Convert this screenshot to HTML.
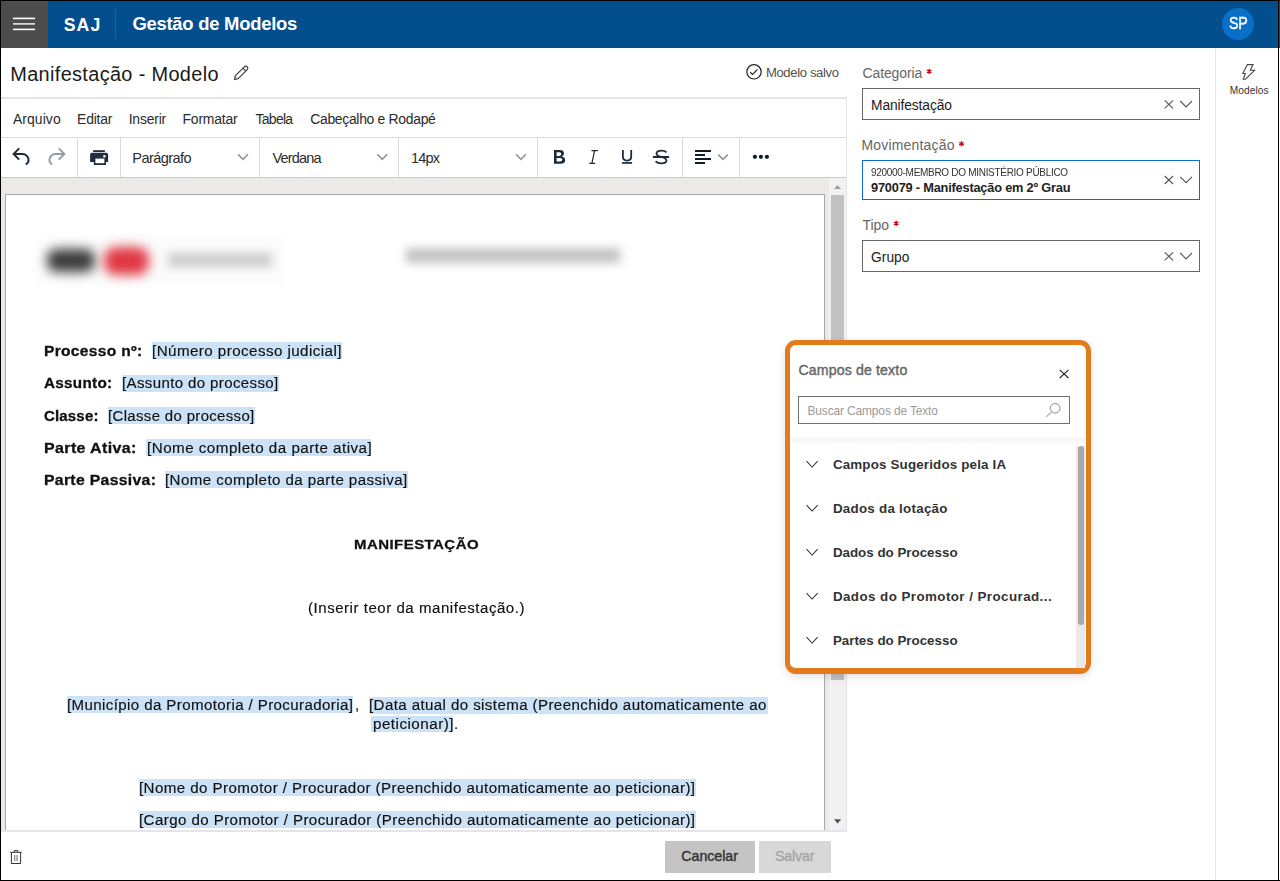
<!DOCTYPE html>
<html><head><meta charset="utf-8">
<style>
html,body{margin:0;padding:0;}
body{width:1280px;height:881px;overflow:hidden;position:relative;background:#fff;font-family:"Liberation Sans",sans-serif;}
.a{position:absolute;}
.t{position:absolute;white-space:pre;line-height:1;font-family:"Liberation Sans",sans-serif;}
</style></head><body>
<!-- header -->
<div class="a" style="left:0;top:0;width:1280px;height:48px;background:#034e8c"></div>
<div class="a" style="left:1px;top:1px;width:47px;height:47px;background:#4c4c4c"></div>
<div class="a" style="left:115px;top:9px;width:1px;height:30px;background:#1a64a6"></div>
<div class="a" style="left:1222px;top:8px;width:32px;height:32px;border-radius:50%;background:#0a6fc9"></div>

<!-- editor title row separator -->
<div class="a" style="left:1px;top:97px;width:846px;height:2px;background:#e4e4ea"></div>
<div class="a" style="left:846px;top:97px;width:1px;height:735px;background:#e4e4ea"></div>
<div class="a" style="left:1px;top:137px;width:845px;height:1px;background:#dcdcdc"></div>
<div class="a" style="left:1px;top:177px;width:845px;height:1px;background:#cacaca"></div>
<!-- toolbar separators -->
<div class="a" style="left:77px;top:138px;width:1px;height:39px;background:#dadada"></div>
<div class="a" style="left:120px;top:138px;width:1px;height:39px;background:#dadada"></div>
<div class="a" style="left:259px;top:138px;width:1px;height:39px;background:#dadada"></div>
<div class="a" style="left:398px;top:138px;width:1px;height:39px;background:#dadada"></div>
<div class="a" style="left:537px;top:138px;width:1px;height:39px;background:#dadada"></div>
<div class="a" style="left:682px;top:138px;width:1px;height:39px;background:#dadada"></div>
<div class="a" style="left:739px;top:138px;width:1px;height:39px;background:#dadada"></div>

<!-- editor content area -->
<div class="a" style="left:1px;top:178px;width:845px;height:652px;background:#ebeae8;overflow:hidden">
  <div class="a" style="left:4px;top:16px;width:818px;height:700px;background:#fff;border:1px solid #a8a8a8;border-bottom:none"></div>
</div>
<div class="a" style="left:1px;top:830px;width:846px;height:2px;background:#e4e4ea"></div>
<!-- scrollbar -->
<div class="a" style="left:829px;top:178px;width:17px;height:652px;background:#f1f1f1"></div>
<div class="a" style="left:831px;top:195px;width:13px;height:485px;background:#c1c1c1"></div>

<!-- blurred logo -->
<div class="a" style="left:38px;top:238px;width:246px;height:46px;background:#fbfbfb;filter:blur(5px)"></div>
<div class="a" style="left:47px;top:249px;width:48px;height:23px;background:#3c3c3c;border-radius:9px;filter:blur(6px)"></div>
<div class="a" style="left:104px;top:247px;width:45px;height:28px;background:#e03843;border-radius:12px;filter:blur(6px)"></div>
<div class="a" style="left:168px;top:253px;width:104px;height:14px;background:#cdcdcd;filter:blur(5px)"></div>
<div class="a" style="left:406px;top:248px;width:214px;height:15px;background:#c2c2c2;filter:blur(5px)"></div>

<!-- highlights -->
<div class="a" style="left:152px;top:342px;width:190px;height:17px;background:#cce2f6"></div>
<div class="a" style="left:122px;top:375px;width:157px;height:17px;background:#cce2f6"></div>
<div class="a" style="left:108px;top:407px;width:147px;height:17px;background:#cce2f6"></div>
<div class="a" style="left:146px;top:439px;width:225px;height:17px;background:#cce2f6"></div>
<div class="a" style="left:165px;top:471px;width:243px;height:17px;background:#cce2f6"></div>
<div class="a" style="left:67px;top:696px;width:286px;height:17px;background:#cce2f6"></div>
<div class="a" style="left:369px;top:697px;width:399px;height:17px;background:#cce2f6"></div>
<div class="a" style="left:371px;top:716px;width:82px;height:16px;background:#cce2f6"></div>
<div class="a" style="left:139px;top:779px;width:557px;height:17px;background:#cce2f6"></div>
<div class="a" style="left:139px;top:811px;width:557px;height:17px;background:#cce2f6"></div>

<!-- right panel -->
<div class="a" style="left:1215px;top:48px;width:1px;height:832px;background:#e6e6e6"></div>
<div class="a" style="left:862px;top:88px;width:336px;height:30px;border:1px solid #666"></div>
<div class="a" style="left:862px;top:160px;width:336px;height:38px;border:1px solid #0a6ccf"></div>
<div class="a" style="left:862px;top:240px;width:336px;height:30px;border:1px solid #666"></div>

<!-- footer buttons -->
<div class="a" style="left:665px;top:841px;width:90px;height:32px;background:#c4c4c4"></div>
<div class="a" style="left:759px;top:841px;width:72px;height:32px;background:#d8d8d8"></div>

<!-- popup -->
<div class="a" style="left:785px;top:340px;width:296px;height:323px;border:5px solid #e37b1c;border-bottom-width:6px;border-radius:11px;background:#fff;box-shadow:0 3px 8px rgba(0,0,0,0.12)">
</div>
<div class="a" style="left:798px;top:396px;width:270px;height:26px;border:1px solid #707070"></div>
<div class="a" style="left:790px;top:438px;width:295px;height:8px;background:linear-gradient(#f4f4f4,#fff)"></div>
<div class="a" style="left:1076px;top:446px;width:9px;height:222px;background:#e9e9e9"></div>
<div class="a" style="left:1078px;top:446px;width:6px;height:179px;background:#a8a8a8;border-radius:3px"></div>

<!-- black frame -->
<div class="a" style="left:0;top:0;width:1280px;height:1px;background:#000"></div>
<div class="a" style="left:0;top:0;width:1px;height:881px;background:#000"></div>
<div class="a" style="left:0;top:880px;width:1280px;height:1px;background:#000"></div>
<div class="a" style="left:1278px;top:0;width:1px;height:881px;background:#000"></div>

<svg class="a" style="left:0;top:0" width="1280" height="881" viewBox="0 0 1280 881">
<!-- hamburger -->
<rect x="13" y="17.6" width="22" height="1.6" fill="#fff"/>
<rect x="13" y="23.1" width="22" height="1.6" fill="#e8e8e8"/>
<rect x="13" y="28.6" width="22" height="1.6" fill="#fff"/>
<!-- pencil -->
<g transform="translate(241.2,72.8) rotate(-45)">
<path d="M-6.5,-2 L6.5,-2 A2,2 0 0 1 6.5,2 L-6.5,2 L-9.5,0 Z" fill="none" stroke="#333" stroke-width="1.1"/>
<line x1="4.5" y1="-2" x2="4.5" y2="2" stroke="#333" stroke-width="1"/>
<path d="M-6.5,-2 L-9.5,0 L-6.5,2 Z" fill="#888"/>
</g>
<!-- check circle -->
<circle cx="754" cy="71.8" r="7.2" fill="none" stroke="#222" stroke-width="1.2"/>
<path d="M750.3,72.3 L752.5,74.4 L757.5,69.3" fill="none" stroke="#222" stroke-width="1.2"/>
<!-- undo -->
<path d="M19.2,148.4 L13.6,154 L19.2,159.6" fill="none" stroke="#1f2d3d" stroke-width="2"/>
<path d="M13.6,154 L22,154 A6.5,5.8 0 0 1 25.8,164.5" fill="none" stroke="#1f2d3d" stroke-width="2"/>
<!-- redo -->
<path d="M58.8,148.4 L64.4,154 L58.8,159.6" fill="none" stroke="#959ca3" stroke-width="2"/>
<path d="M64.4,154 L56,154 A6.5,5.8 0 0 0 52.2,164.5" fill="none" stroke="#959ca3" stroke-width="2"/>
<!-- printer -->
<rect x="93.1" y="150.2" width="11.8" height="1.8" fill="#1f2d3d"/>
<path d="M92,152.7 L106.2,152.7 Q108.1,152.7 108.1,154.6 L108.1,161.9 L106,161.9 L106,165 L93.8,165 L93.8,161.9 L90.1,161.9 L90.1,154.6 Q90.1,152.7 92,152.7 Z" fill="#1f2d3d"/>
<rect x="95.4" y="158.6" width="9" height="4.6" fill="#fff"/>
<circle cx="104.4" cy="156.3" r="1.2" fill="#fff"/>
<!-- toolbar chevrons -->
<path d="M238,154.3 L243,159.3 L248,154.3" fill="none" stroke="#8d949b" stroke-width="1.6"/>
<path d="M377.3,154.3 L382.3,159.3 L387.3,154.3" fill="none" stroke="#8d949b" stroke-width="1.6"/>
<path d="M516,154.3 L521,159.3 L526,154.3" fill="none" stroke="#8d949b" stroke-width="1.6"/>
<path d="M718.2,154.6 L723,159.4 L727.8,154.6" fill="none" stroke="#8d949b" stroke-width="1.6"/>
<!-- B I U S -->
<path d="M554,150.1 L559.6,150.1 Q564,150.1 564,153.5 Q564,155.8 561.6,156.6 Q565.2,157.4 565.2,160.2 Q565.2,163.8 560.4,163.8 L554,163.8 Z M556.6,152.3 L556.6,155.9 L559.4,155.9 Q561.3,155.9 561.3,154.1 Q561.3,152.3 559.4,152.3 Z M556.6,158 L556.6,161.6 L560,161.6 Q562.4,161.6 562.4,159.8 Q562.4,158 560,158 Z" fill="#1d2a3a" fill-rule="evenodd"/>
<path d="M591.5,150.6 L597.8,150.6 M589.2,163.4 L595.2,163.4 M594.6,150.6 L591.9,163.4" fill="none" stroke="#1d2a3a" stroke-width="1.2"/>
<path d="M622.9,150.1 L622.9,156.6 Q622.9,160.6 627.1,160.6 Q631.2,160.6 631.2,156.6 L631.2,150.1" fill="none" stroke="#1d2a3a" stroke-width="1.8"/>
<rect x="622" y="162.1" width="10.1" height="1.7" fill="#1d2a3a"/>
<path d="M666.5,152.3 Q665,150.7 661.5,150.7 Q656.5,150.7 656.5,153.8 Q656.5,155.8 661,156.8 Q666.5,158 666.5,160.6 Q666.5,163.3 661.5,163.3 Q657.5,163.3 655.5,161.3" fill="none" stroke="#1d2a3a" stroke-width="1.8"/>
<rect x="652.9" y="156" width="16.2" height="2" fill="#1d2a3a"/>
<!-- align -->
<rect x="695" y="150" width="16" height="2" fill="#111d2c"/>
<rect x="695" y="154" width="10" height="2" fill="#111d2c"/>
<rect x="695" y="158" width="16" height="2" fill="#111d2c"/>
<rect x="695" y="162" width="10" height="2" fill="#111d2c"/>
<!-- dots -->
<circle cx="754.9" cy="156.8" r="2.1" fill="#111d2c"/>
<circle cx="760.9" cy="156.8" r="2.1" fill="#111d2c"/>
<circle cx="766.9" cy="156.8" r="2.1" fill="#111d2c"/>
<!-- editor scroll arrows -->
<path d="M834,189 L837.5,185 L841,189 Z" fill="#a3a3a3"/>
<path d="M834,819.3 L837.6,823.5 L841.2,819.3 Z" fill="#505050"/>
<!-- input X and chevrons -->
<g fill="none" stroke="#555" stroke-width="1.1">
<path d="M1164.7,100.3 L1173.1,108.3 M1173.1,100.3 L1164.7,108.3"/>
<path d="M1180.2,101 L1186.1,106.9 L1192,101"/>
<path d="M1164.7,176 L1173.1,184 M1173.1,176 L1164.7,184"/>
<path d="M1180.2,176.8 L1186.1,182.7 L1192,176.8"/>
<path d="M1164.7,252.3 L1173.1,260.3 M1173.1,252.3 L1164.7,260.3"/>
<path d="M1180.2,253 L1186.1,258.9 L1192,253"/>
</g>
<!-- lightning -->
<path d="M1247.4,64.6 L1253,64.6 L1250.3,70.3 L1254.6,70.3 L1245.5,79.2 L1243.3,79.2 L1245.3,73.5 L1242.8,73.5 Z" fill="none" stroke="#444" stroke-width="1.1" stroke-linejoin="miter"/>
<!-- popup close -->
<path d="M1059.7,369.8 L1068.5,378 M1068.5,369.8 L1059.7,378" fill="none" stroke="#222" stroke-width="1.05"/>
<!-- search icon -->
<circle cx="1055.2" cy="408.3" r="4.8" fill="none" stroke="#8a8a8a" stroke-width="1"/>
<path d="M1051.8,411.8 L1046.3,416.8" fill="none" stroke="#8a8a8a" stroke-width="1"/>
<!-- list chevrons -->
<g fill="none" stroke="#333" stroke-width="1.05">
<path d="M806.5,461.2 L812.1,467 L817.7,461.2"/>
<path d="M806.5,505.2 L812.1,511 L817.7,505.2"/>
<path d="M806.5,549.2 L812.1,555 L817.7,549.2"/>
<path d="M806.5,593.2 L812.1,599 L817.7,593.2"/>
<path d="M806.5,637.2 L812.1,643 L817.7,637.2"/>
</g>
<!-- trash -->
<g fill="none" stroke="#333" stroke-width="1">
<path d="M10.2,852.3 L21.7,852.3"/>
<path d="M14.2,852.3 L14.2,850.6 L17.8,850.6 L17.8,852.3"/>
<path d="M11.4,852.3 L11.4,863.5 L20.6,863.5 L20.6,852.3"/>
</g>
<rect x="14.3" y="855" width="0.9" height="6" fill="#555"/>
<rect x="16.6" y="855" width="0.9" height="6" fill="#555"/>
<!-- asterisks -->
<path d="M929.20,68.80 L929.20,74.00 M926.95,70.10 L931.45,72.70 M931.45,70.10 L926.95,72.70" stroke="#d0021b" stroke-width="1.3" fill="none"/>
<path d="M961.50,141.20 L961.50,146.40 M959.25,142.50 L963.75,145.10 M963.75,142.50 L959.25,145.10" stroke="#d0021b" stroke-width="1.3" fill="none"/>
<path d="M896.20,220.80 L896.20,226.00 M893.95,222.10 L898.45,224.70 M898.45,222.10 L893.95,224.70" stroke="#d0021b" stroke-width="1.3" fill="none"/>
</svg>

<div class="t" style="left:63.80px;top:16.50px;font-size:17.73px;font-weight:700;color:#fff;letter-spacing:0.993px">SAJ</div>
<div class="t" style="left:132.40px;top:14.80px;font-size:18.46px;font-weight:700;color:#fff;letter-spacing:-0.262px">Gestão de Modelos</div>
<div class="t" style="left:1229.00px;top:15.90px;font-size:15.70px;font-weight:400;color:#fff;letter-spacing:-0.375px;-webkit-text-stroke:0.4px #fff;transform:scaleX(0.9060);transform-origin:0 0">SP</div>
<div class="t" style="left:10.25px;top:64.80px;font-size:19.91px;font-weight:400;color:#1a1a1a;letter-spacing:0.345px">Manifestação - Modelo</div>
<div class="t" style="left:765.90px;top:66.00px;font-size:13.08px;font-weight:400;color:#505050;letter-spacing:-0.362px">Modelo salvo</div>
<div class="t" style="left:12.90px;top:112.50px;font-size:13.95px;font-weight:400;color:#2b2b2b;letter-spacing:0.082px">Arquivo</div>
<div class="t" style="left:77.10px;top:112.50px;font-size:13.95px;font-weight:400;color:#2b2b2b;letter-spacing:-0.214px">Editar</div>
<div class="t" style="left:128.70px;top:112.50px;font-size:13.95px;font-weight:400;color:#2b2b2b;letter-spacing:-0.197px">Inserir</div>
<div class="t" style="left:182.50px;top:112.50px;font-size:13.95px;font-weight:400;color:#2b2b2b;letter-spacing:-0.184px">Formatar</div>
<div class="t" style="left:255.60px;top:112.50px;font-size:13.95px;font-weight:400;color:#2b2b2b;letter-spacing:-0.724px">Tabela</div>
<div class="t" style="left:310.20px;top:112.50px;font-size:13.95px;font-weight:400;color:#2b2b2b;letter-spacing:-0.312px">Cabeçalho e Rodapé</div>
<div class="t" style="left:132.30px;top:151.00px;font-size:14.54px;font-weight:400;color:#2b2b2b;letter-spacing:-0.554px">Parágrafo</div>
<div class="t" style="left:272.40px;top:151.00px;font-size:14.54px;font-weight:400;color:#2b2b2b;letter-spacing:-0.843px">Verdana</div>
<div class="t" style="left:411.00px;top:151.00px;font-size:14.54px;font-weight:400;color:#2b2b2b;letter-spacing:-0.815px">14px</div>
<div class="t" style="left:862.60px;top:66.80px;font-size:13.95px;font-weight:400;color:#666;letter-spacing:-0.110px">Categoria</div>
<div class="t" style="left:871.00px;top:98.80px;font-size:13.81px;font-weight:400;color:#222;letter-spacing:-0.099px">Manifestação</div>
<div class="t" style="left:861.50px;top:138.80px;font-size:13.95px;font-weight:400;color:#666;letter-spacing:0.211px">Movimentação</div>
<div class="t" style="left:871.20px;top:167.10px;font-size:10.76px;font-weight:400;color:#333;letter-spacing:-0.324px;transform:scaleX(0.9308);transform-origin:0 0">920000-MEMBRO DO MINISTÉRIO PÚBLICO</div>
<div class="t" style="left:871.00px;top:182.10px;font-size:12.79px;font-weight:700;color:#222;letter-spacing:-0.200px">970079 - Manifestação em 2º Grau</div>
<div class="t" style="left:862.50px;top:218.70px;font-size:13.95px;font-weight:400;color:#666;letter-spacing:0.000px">Tipo</div>
<div class="t" style="left:871.00px;top:251.00px;font-size:13.81px;font-weight:400;color:#222;letter-spacing:0.032px">Grupo</div>
<div class="t" style="left:1229.70px;top:85.90px;font-size:10.17px;font-weight:400;color:#333;letter-spacing:0.082px">Modelos</div>
<div class="t" style="left:798.40px;top:362.90px;font-size:14.10px;font-weight:400;color:#666;letter-spacing:0.164px;-webkit-text-stroke:0.4px #666">Campos de texto</div>
<div class="t" style="left:807.50px;top:405.70px;font-size:11.92px;font-weight:400;color:#9a9a9a;letter-spacing:-0.114px">Buscar Campos de Texto</div>
<div class="t" style="left:832.90px;top:457.90px;font-size:13.37px;font-weight:700;color:#333;letter-spacing:0.169px">Campos Sugeridos pela IA</div>
<div class="t" style="left:832.90px;top:501.90px;font-size:13.37px;font-weight:700;color:#333;letter-spacing:0.263px">Dados da lotação</div>
<div class="t" style="left:832.90px;top:545.90px;font-size:13.37px;font-weight:700;color:#333;letter-spacing:-0.004px">Dados do Processo</div>
<div class="t" style="left:832.90px;top:589.90px;font-size:13.37px;font-weight:700;color:#333;letter-spacing:0.437px">Dados do Promotor / Procurad...</div>
<div class="t" style="left:832.90px;top:633.90px;font-size:13.37px;font-weight:700;color:#333;letter-spacing:-0.005px">Partes do Processo</div>
<div class="t" style="left:681.25px;top:848.80px;font-size:14.24px;font-weight:400;color:#333;letter-spacing:-0.032px;-webkit-text-stroke:0.4px #333">Cancelar</div>
<div class="t" style="left:775.00px;top:848.80px;font-size:14.24px;font-weight:400;color:#a6a6a6;letter-spacing:-0.161px;-webkit-text-stroke:0.4px #a6a6a6">Salvar</div>
<div class="t" style="left:43.90px;top:343.80px;font-size:14.24px;font-weight:700;color:#111;letter-spacing:0.285px;-webkit-text-stroke:0.3px #111;transform:scaleX(1.0930);transform-origin:0 0">Processo nº:</div>
<div class="t" style="left:152.43px;top:343.80px;font-size:14.24px;font-weight:400;color:#111;letter-spacing:0.406px;-webkit-text-stroke:0.15px #111;transform:scaleX(1.0653);transform-origin:0 0">[Número processo judicial]</div>
<div class="t" style="left:43.90px;top:376.40px;font-size:14.24px;font-weight:700;color:#111;letter-spacing:0.256px;-webkit-text-stroke:0.3px #111;transform:scaleX(1.0737);transform-origin:0 0">Assunto:</div>
<div class="t" style="left:122.34px;top:376.40px;font-size:14.24px;font-weight:400;color:#111;letter-spacing:0.363px;-webkit-text-stroke:0.15px #111;transform:scaleX(1.0551);transform-origin:0 0">[Assunto do processo]</div>
<div class="t" style="left:43.90px;top:408.60px;font-size:14.24px;font-weight:700;color:#111;letter-spacing:0.176px;-webkit-text-stroke:0.3px #111;transform:scaleX(1.0519);transform-origin:0 0">Classe:</div>
<div class="t" style="left:108.25px;top:408.60px;font-size:14.24px;font-weight:400;color:#111;letter-spacing:0.332px;-webkit-text-stroke:0.15px #111;transform:scaleX(1.0505);transform-origin:0 0">[Classe do processo]</div>
<div class="t" style="left:43.90px;top:440.80px;font-size:14.24px;font-weight:700;color:#111;letter-spacing:0.334px;-webkit-text-stroke:0.3px #111;transform:scaleX(1.1226);transform-origin:0 0">Parte Ativa:</div>
<div class="t" style="left:146.53px;top:440.80px;font-size:14.24px;font-weight:400;color:#111;letter-spacing:0.432px;-webkit-text-stroke:0.15px #111;transform:scaleX(1.0683);transform-origin:0 0">[Nome completo da parte ativa]</div>
<div class="t" style="left:43.90px;top:473.00px;font-size:14.24px;font-weight:700;color:#111;letter-spacing:0.303px;-webkit-text-stroke:0.3px #111;transform:scaleX(1.1051);transform-origin:0 0">Parte Passiva:</div>
<div class="t" style="left:165.34px;top:473.00px;font-size:14.24px;font-weight:400;color:#111;letter-spacing:0.396px;-webkit-text-stroke:0.15px #111;transform:scaleX(1.0609);transform-origin:0 0">[Nome completo da parte passiva]</div>
<div class="t" style="left:353.50px;top:537.80px;font-size:13.52px;font-weight:700;color:#111;letter-spacing:0.410px;-webkit-text-stroke:0.3px #111;transform:scaleX(1.1085);transform-origin:0 0">MANIFESTAÇÃO</div>
<div class="t" style="left:307.60px;top:602.30px;font-size:13.81px;font-weight:400;color:#111;letter-spacing:0.496px;-webkit-text-stroke:0.15px #111;transform:scaleX(1.0882);transform-origin:0 0">(Inserir teor da manifestação.)</div>
<div class="t" style="left:67.34px;top:698.00px;font-size:14.24px;font-weight:400;color:#111;letter-spacing:0.366px;-webkit-text-stroke:0.15px #111;transform:scaleX(1.0596);transform-origin:0 0">[Município da Promotoria / Procuradoria]</div>
<div class="t" style="left:355.44px;top:698.00px;font-size:14.24px;font-weight:400;color:#111;letter-spacing:0.000px;-webkit-text-stroke:0.15px #111;transform:scaleX(1.0600);transform-origin:0 0">,</div>
<div class="t" style="left:369.04px;top:698.00px;font-size:14.24px;font-weight:400;color:#111;letter-spacing:0.382px;-webkit-text-stroke:0.15px #111;transform:scaleX(1.0593);transform-origin:0 0">[Data atual do sistema (Preenchido automaticamente ao</div>
<div class="t" style="left:372.50px;top:717.00px;font-size:14.24px;font-weight:400;color:#111;letter-spacing:0.422px;-webkit-text-stroke:0.15px #111;transform:scaleX(1.0716);transform-origin:0 0">peticionar)]</div>
<div class="t" style="left:453.94px;top:717.00px;font-size:14.24px;font-weight:400;color:#111;letter-spacing:0.000px;-webkit-text-stroke:0.15px #111;transform:scaleX(1.0600);transform-origin:0 0">.</div>
<div class="t" style="left:139.24px;top:781.10px;font-size:14.24px;font-weight:400;color:#111;letter-spacing:0.396px;-webkit-text-stroke:0.15px #111;transform:scaleX(1.0624);transform-origin:0 0">[Nome do Promotor / Procurador (Preenchido automaticamente ao peticionar)]</div>
<div class="t" style="left:139.24px;top:813.00px;font-size:14.24px;font-weight:400;color:#111;letter-spacing:0.386px;-webkit-text-stroke:0.15px #111;transform:scaleX(1.0615);transform-origin:0 0">[Cargo do Promotor / Procurador (Preenchido automaticamente ao peticionar)]</div>
</body></html>
